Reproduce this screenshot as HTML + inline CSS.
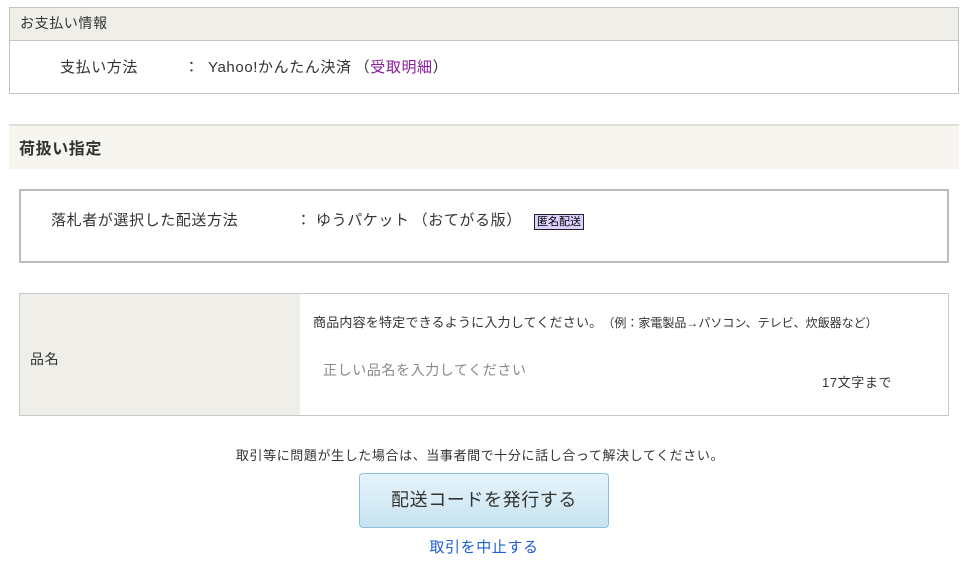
<!DOCTYPE html>
<html><head><meta charset="utf-8"><style>
*{margin:0;padding:0;box-sizing:border-box}
body{width:975px;height:563px;background:#fff;font-family:"Liberation Sans","Noto Sans CJK JP",sans-serif;color:#333;position:relative;overflow:hidden;letter-spacing:0.6px}
.a{position:absolute;white-space:nowrap}
</style></head><body>
<div class="a" style="left:9px;top:7px;width:950px;height:87px;border:1px solid #c4c4c4"></div>
<div class="a" style="left:10px;top:8px;width:948px;height:33px;background:#efeee8;border-bottom:1px solid #c4c4c4"></div>
<div class="a" style="left:20px;top:13px;font-size:14px">お支払い情報</div>
<div class="a" style="left:60px;top:56px;font-size:15px">支払い方法</div>
<div class="a" style="left:184px;top:56px;font-size:15px">：</div>
<div class="a" style="left:208px;top:56px;font-size:15px">Yahoo!かんたん決済<span style="margin-left:3px">（</span><span style="color:#8a1d9e">受取明細</span>）</div>

<div class="a" style="left:9px;top:124px;width:950px;height:45px;background:#f6f5f0;border-top:2px solid #e0dfda"></div>
<div class="a" style="left:19px;top:135px;font-size:16px;font-weight:bold">荷扱い指定</div>

<div class="a" style="left:19px;top:189px;width:930px;height:74px;border:2px solid #bcbcbc"></div>
<div class="a" style="left:51px;top:209px;font-size:15px">落札者が選択した配送方法</div>
<div class="a" style="left:296px;top:209px;font-size:15px">：</div>
<div class="a" style="left:316px;top:209px;font-size:15px">ゆうパケット<span style="margin-left:3px">（</span>おてがる版）</div>
<div class="a" style="left:534px;top:214px;width:50px;height:16px;background:#dcd0ff;border:1px solid #222;font-size:11px;line-height:14px;text-align:center;color:#000;letter-spacing:0">匿名配送</div>

<div class="a" style="left:19px;top:293px;width:930px;height:123px;border:1px solid #c8c8c8"></div>
<div class="a" style="left:20px;top:294px;width:280px;height:121px;background:#efeee8"></div>
<div class="a" style="left:30px;top:349px;font-size:14px">品名</div>
<div class="a" style="left:313px;top:312px;font-size:13px;letter-spacing:0.2px">商品内容を特定できるように入力してください。<span style="font-size:12px;margin-left:6px;letter-spacing:0">（例：家電製品→パソコン、テレビ、炊飯器など）</span></div>
<div class="a" style="left:323px;top:360px;font-size:14px;color:#888">正しい品名を入力してください</div>
<div class="a" style="left:822px;top:372px;font-size:13px">17文字まで</div>

<div class="a" style="left:0;width:960px;top:445px;font-size:13px;text-align:center">取引等に問題が生した場合は、当事者間で十分に話し合って解決してください。</div>
<div class="a" style="left:359px;top:473px;width:250px;height:55px;border:1px solid #8dbfdc;border-radius:4px;background:linear-gradient(#e6f4fb,#c7e3f1);font-size:18px;line-height:53px;text-align:center;color:#333">配送コードを発行する</div>
<div class="a" style="left:0;width:968px;top:536px;font-size:15px;text-align:center;color:#1d5ed8">取引を中止する</div>
</body></html>
